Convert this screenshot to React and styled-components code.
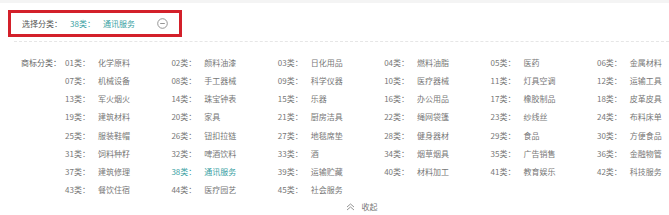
import styled, { createGlobalStyle } from 'styled-components';

const GlobalStyle = createGlobalStyle`
  html, body {
    margin: 0;
    padding: 0;
    background: #fff;
  }
  body {
    font-family: 'Noto Sans CJK SC', 'Noto Sans', sans-serif;
    font-size: 8px;
    color: #777;
  }
`;

const teal = '#3a9fa3';

const Page = styled.div`
  width: 669px;
  height: 215px;
  border-top: 3px solid #f4f4f4;
  box-sizing: border-box;
  overflow: hidden;
`;

const Header = styled.div`
  padding-top: 7px;
  height: 39px;
  margin-left: 14px;
  border-bottom: 1px dashed #e6e6e6;
  box-sizing: border-box;
  .picked-box {
    display: inline-flex;
    align-items: center;
    width: 174px;
    height: 27px;
    margin-left: -6px;
    box-sizing: border-box;
    border: 3px solid #d3202a;
    padding-left: 11px;
    .picked-label {
      color: #555;
    }
    .picked-value {
      color: ${teal};
      margin-left: 8px;
      .picked-no {
        margin-right: 8px;
      }
    }
    .picked-remove {
      margin-left: 22px;
      display: flex;
    }
  }
`;

const Classes = styled.div`
  display: flex;
  padding: 12px 0 0 21px;
  .classes-label {
    width: 44px;
    flex: none;
    white-space: nowrap;
    line-height: 18.15px;
    color: #666;
  }
`;

const ClassGrid = styled.ul`
  list-style: none;
  margin: 0;
  padding: 0;
  display: grid;
  grid-template-columns: repeat(5, 106.4px) 1fr;
  grid-auto-rows: 18.15px;
`;

const ClassItem = styled.li`
  white-space: nowrap;
  line-height: 18.15px;
  color: ${(props) => (props.active ? teal : '#777')};
  cursor: pointer;
  .class-no {
    margin-right: 8px;
  }
`;

const Collapse = styled.div`
  display: flex;
  justify-content: center;
  align-items: center;
  gap: 7px;
  padding-left: 54px;
  line-height: 16px;
  color: #777;
  cursor: pointer;
  .collapse-icon {
    display: flex;
  }
`;

const classNames = [
  '化学原料', '颜料油漆', '日化用品', '燃料油脂', '医药', '金属材料',
  '机械设备', '手工器械', '科学仪器', '医疗器械', '灯具空调', '运输工具',
  '军火烟火', '珠宝钟表', '乐器', '办公用品', '橡胶制品', '皮革皮具',
  '建筑材料', '家具', '厨房洁具', '绳网袋篷', '纱线丝', '布料床单',
  '服装鞋帽', '钮扣拉链', '地毯席垫', '健身器材', '食品', '方便食品',
  '饲料种籽', '啤酒饮料', '酒', '烟草烟具', '广告销售', '金融物管',
  '建筑修理', '通讯服务', '运输贮藏', '材料加工', '教育娱乐', '科技服务',
  '餐饮住宿', '医疗园艺', '社会服务',
];

const selected = 38;

const App = () => {
  return (
    <>
      <GlobalStyle />
      <Page>
        <Header>
          <div className="picked-box">
            <span className="picked-label">选择分类：</span>
            <span className="picked-value">
              <span className="picked-no">{selected}类：</span>
              {classNames[selected - 1]}
            </span>
            <span className="picked-remove">
              <svg width="11" height="11" viewBox="0 0 11 11">
                <circle cx="5.5" cy="5.5" r="4.8" fill="none" stroke="#8a8a8a" strokeWidth="0.9" />
                <line x1="3.2" y1="5.5" x2="7.8" y2="5.5" stroke="#8a8a8a" strokeWidth="0.9" />
              </svg>
            </span>
          </div>
        </Header>
        <Classes>
          <div className="classes-label">商标分类：</div>
          <ClassGrid>
            {classNames.map((name, i) => {
              const no = String(i + 1).padStart(2, '0');
              return (
                <ClassItem key={no} active={i + 1 === selected}>
                  <span className="class-no">{no}类：</span>
                  {name}
                </ClassItem>
              );
            })}
          </ClassGrid>
        </Classes>
        <Collapse>
          <span className="collapse-icon">
            <svg width="9" height="8" viewBox="0 0 9 8">
              <polyline points="1,4 4.5,1 8,4" fill="none" stroke="#888" strokeWidth="0.9" />
              <polyline points="1,7 4.5,4 8,7" fill="none" stroke="#888" strokeWidth="0.9" />
            </svg>
          </span>
          <span>收起</span>
        </Collapse>
      </Page>
    </>
  );
};

export default App;
